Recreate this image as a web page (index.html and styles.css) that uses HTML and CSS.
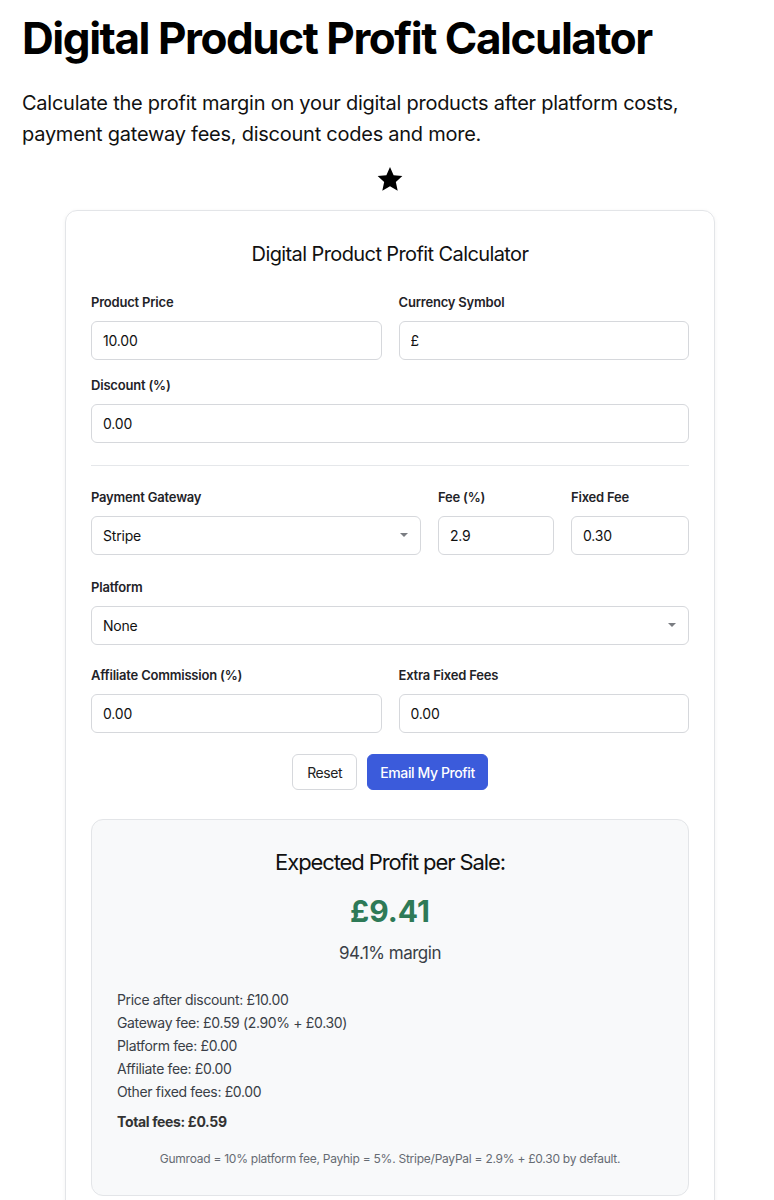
FILE: index.html
```html
<!DOCTYPE html>
<html lang="en">
<head>
<meta charset="utf-8">
<title>Digital Product Profit Calculator</title>
<link rel="stylesheet" href="styles.css">
</head>
<body>
<main class="page">
  <h1 class="page-title">Digital Product Profit Calculator</h1>
  <p class="lead">Calculate the profit margin on your digital products after platform costs, payment gateway fees, discount codes and more.</p>
  <div class="star-row">
    <svg class="star" viewBox="0 0 24 24" width="28" height="28" aria-hidden="true"><path d="M12 1.8l3.1 6.9 7.5.8-5.6 5.1 1.6 7.4L12 18.2l-6.6 3.8 1.6-7.4-5.6-5.1 7.5-.8z" fill="#000"/></svg>
  </div>

  <section class="card">
    <h2 class="card-title">Digital Product Profit Calculator</h2>

    <div class="row two">
      <div class="field">
        <label class="label">Product Price</label>
        <input class="input" type="text" value="10.00">
      </div>
      <div class="field">
        <label class="label">Currency Symbol</label>
        <input class="input" type="text" value="£">
      </div>
    </div>

    <div class="row one">
      <div class="field">
        <label class="label">Discount (%)</label>
        <input class="input" type="text" value="0.00">
      </div>
    </div>

    <hr class="divider">

    <div class="row three gateway">
      <div class="field">
        <label class="label">Payment Gateway</label>
        <div class="select-wrap"><select class="input select"><option>Stripe</option></select></div>
      </div>
      <div class="field">
        <label class="label">Fee (%)</label>
        <input class="input" type="text" value="2.9">
      </div>
      <div class="field">
        <label class="label">Fixed Fee</label>
        <input class="input" type="text" value="0.30">
      </div>
    </div>

    <div class="row one platform">
      <div class="field">
        <label class="label">Platform</label>
        <div class="select-wrap"><select class="input select"><option>None</option></select></div>
      </div>
    </div>

    <div class="row two last">
      <div class="field">
        <label class="label">Affiliate Commission (%)</label>
        <input class="input" type="text" value="0.00">
      </div>
      <div class="field">
        <label class="label">Extra Fixed Fees</label>
        <input class="input" type="text" value="0.00">
      </div>
    </div>

    <div class="actions">
      <button class="btn btn-light">Reset</button>
      <button class="btn btn-primary">Email My Profit</button>
    </div>

    <div class="result">
      <h3 class="result-title">Expected Profit per Sale:</h3>
      <div class="profit">£9.41</div>
      <div class="margin">94.1% margin</div>
      <ul class="breakdown">
        <li>Price after discount: £10.00</li>
        <li>Gateway fee: £0.59 (2.90% + £0.30)</li>
        <li>Platform fee: £0.00</li>
        <li>Affiliate fee: £0.00</li>
        <li>Other fixed fees: £0.00</li>
        <li class="total">Total fees: £0.59</li>
      </ul>
      <p class="note">Gumroad = 10% platform fee, Payhip = 5%. Stripe/PayPal = 2.9% + £0.30 by default.</p>
    </div>
  </section>
</main>
</body>
</html>
```

FILE: styles.css
```css
* { box-sizing: border-box; }
html, body { margin: 0; padding: 0; background: #fff; }
body {
  font-family: Inter, "Open Sans", "Liberation Sans", sans-serif;
  color: #111;
}
.page {
  padding: 10px 16px 40px 22px;
}
.page-title {
  margin: 0;
  font-size: 44px;
  font-weight: 700;
  letter-spacing: -1.45px;
  line-height: 56px;
  color: #000;
}
.lead {
  margin: 22px 0 0;
  font-size: 20px;
  line-height: 31px;
  letter-spacing: -0.25px;
  color: #111;
}
.star-row {
  display: flex;
  justify-content: center;
  margin-top: 15px;
  height: 30px;
}
.card {
  width: 650px;
  margin: 15px auto 0;
  border: 1px solid #e3e5e8;
  border-radius: 12px;
  padding: 28px 25px 26px 25px;
  box-shadow: 0 1px 4px rgba(0,0,0,0.05);
}
.card-title {
  margin: 0 0 24px;
  text-align: center;
  font-size: 20px;
  font-weight: 400;
  letter-spacing: -0.6px;
  line-height: 30px;
  color: #111;
}
.row {
  display: grid;
  column-gap: 17px;
  margin-bottom: 16px;
}
.row.gateway { margin-bottom: 23px; }
.row.platform { margin-bottom: 21px; }
.row.last { margin-bottom: 21px; }
.row.two { grid-template-columns: 1fr 1fr; }
.row.one { grid-template-columns: 1fr; }
.row.three { grid-template-columns: 1fr 116px 118px; }
.field { display: flex; flex-direction: column; }
.label {
  font-size: 13px;
  font-weight: 600;
  color: #1f2328;
  line-height: 18px;
  letter-spacing: -0.2px;
  margin-bottom: 10px;
}
.input {
  width: 100%;
  height: 39px;
  border: 1px solid #d6d8dc;
  border-radius: 6px;
  padding: 0 11px;
  font-family: inherit;
  font-size: 14px;
  letter-spacing: -0.2px;
  color: #111;
  background: #fff;
}
.select-wrap { position: relative; }
.select {
  appearance: none;
  -webkit-appearance: none;
}
.select-wrap::after {
  content: "";
  position: absolute;
  right: 13px;
  top: 17px;
  border-left: 4px solid transparent;
  border-right: 4px solid transparent;
  border-top: 4px solid #7a7d82;
}
.divider {
  border: 0;
  border-top: 1px solid #e5e7ea;
  margin: 22px 0 22px;
}
.actions {
  display: flex;
  justify-content: center;
  gap: 10px;
}
.btn {
  height: 36px;
  border-radius: 6px;
  font-family: inherit;
  font-size: 14px;
  padding: 0 12px;
  letter-spacing: -0.4px;
}
.btn-light {
  background: #fff;
  color: #222;
  border: 1px solid #d6d8dc;
  padding: 0 14px;
}
.btn-primary {
  background: #3b5bdb;
  border: 1px solid #3b5bdb;
  color: #fff;
  font-weight: 500;
}
.result {
  margin-top: 29px;
  background: #f8f9fa;
  border: 1px solid #e3e5e8;
  border-radius: 12px;
  padding: 27px 25px 29px;
}
.result-title {
  margin: 0;
  text-align: center;
  font-size: 22px;
  font-weight: 400;
  letter-spacing: -1.1px;
  line-height: 30px;
  color: #111;
}
.profit {
  margin-top: 14px;
  text-align: center;
  font-size: 30px;
  font-weight: 700;
  color: #2e7a57;
  line-height: 40px;
}
.margin {
  margin-top: 10px;
  text-align: center;
  font-size: 17px;
  letter-spacing: -0.5px;
  color: #3a3f47;
  line-height: 24px;
}
.breakdown {
  list-style: none;
  margin: 23px 0 0;
  padding: 0;
  font-size: 14px;
  line-height: 23px;
  letter-spacing: -0.35px;
  color: #3a3f47;
}
.breakdown .total {
  margin-top: 7px;
  font-weight: 700;
  color: #333;
}
.note {
  margin: 18px 0 0;
  text-align: center;
  font-size: 12px;
  letter-spacing: -0.25px;
  color: #666b73;
}
```
